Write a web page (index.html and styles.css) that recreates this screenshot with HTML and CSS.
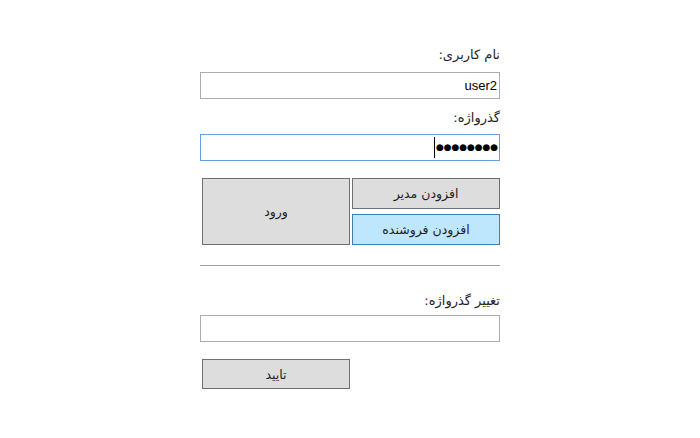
FILE: index.html
```html
<!DOCTYPE html>
<html lang="fa">
<head>
<meta charset="utf-8">
<link rel="stylesheet" href="styles.css">
</head>
<body>
<div class="form">
  <div class="label lbl-user">نام کاربری:</div>
  <div class="textbox">user2</div>
  <div class="label lbl-pass">گذرواژه:</div>
  <div class="textbox focused"><span class="dots">●●●●●●●●</span><span class="caret"></span></div>
  <div class="btn-group">
    <div class="btn-col">
      <div class="btn small">افزودن مدیر</div>
      <div class="btn small hot">افزودن فروشنده</div>
    </div>
    <div class="btn big">ورود</div>
  </div>
  <div class="sep"></div>
  <div class="label lbl-change">تغییر گذرواژه:</div>
  <div class="textbox"></div>
  <div class="confirm-row"><div class="btn confirm">تایید</div></div>
</div>
</body>
</html>
```
FILE: styles.css
```css
html, body {
  margin: 0;
  padding: 0;
  background: #ffffff;
}
body {
  width: 700px;
  height: 438px;
  font-family: "DejaVu Sans", "Noto Sans", sans-serif;
  font-size: 12px;
  color: #1e1e1e;
}
.form {
  width: 300px;
  margin: 0 auto;
  padding-top: 46px;
  display: flex;
  flex-direction: column;
}
.label {
  direction: rtl;
  text-align: right;
  height: 18px;
  line-height: 18px;
  font-size: 13px;
}
.lbl-user { margin-bottom: 8px; }
.lbl-pass { margin-top: 10px; margin-bottom: 7px; }
.lbl-change { margin-top: 26px; margin-bottom: 5px; }
.textbox {
  box-sizing: border-box;
  height: 27px;
  border: 1px solid #abadb3;
  background: #fff;
  display: flex;
  align-items: center;
  justify-content: flex-end;
  padding-right: 2px;
  font-family: "Liberation Sans", sans-serif;
  font-size: 13px;
  color: #000;
}
.textbox.focused {
  border-color: #6a9edc;
  flex-direction: row-reverse;
  justify-content: flex-start;
  padding-right: 1px;
}
.dots {
  font-family: "DejaVu Sans", sans-serif;
  font-size: 9px;
  letter-spacing: -0.1px;
  color: #000;
  line-height: 1;
}
.caret {
  width: 1px;
  height: 21px;
  background: #000;
  margin-right: 1px;
}
.btn-group {
  margin-top: 17px;
  margin-left: 2px;
  display: flex;
  flex-direction: row-reverse;
  gap: 2px;
  height: 67px;
}
.btn-col {
  width: 148px;
  display: flex;
  flex-direction: column;
  justify-content: space-between;
}
.btn {
  box-sizing: border-box;
  background: #dddddd;
  border: 1px solid #707070;
  display: flex;
  align-items: center;
  justify-content: center;
  direction: rtl;
  font-size: 12.5px;
  color: #1e1e1e;
}
.btn.small { height: 31px; }
.btn.hot {
  background: #bee6fd;
  border-color: #3c7fb1;
}
.btn.big {
  width: 148px;
  height: 67px;
}
.sep {
  margin-top: 20px;
  height: 1px;
  background: #a0a0a0;
}
.confirm-row {
  margin-top: 17px;
  margin-left: 2px;
  display: flex;
}
.btn.confirm {
  width: 148px;
  height: 30px;
}
```
